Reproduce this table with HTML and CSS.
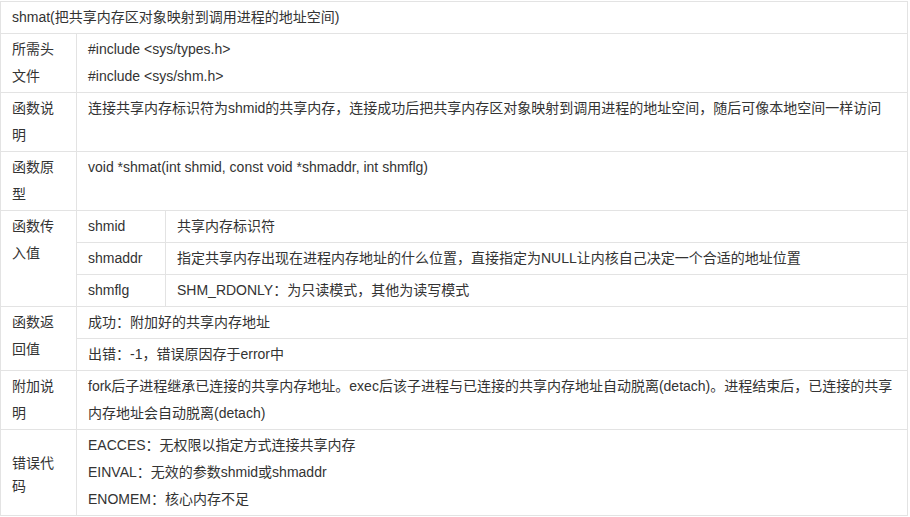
FILE: index.html
```html
<!DOCTYPE html>
<html lang="zh-CN">
<head>
<meta charset="utf-8">
<title>shmat</title>
<link rel="stylesheet" href="styles.css">
</head>
<body>
<table class="api">
  <colgroup>
    <col class="c1">
    <col class="c2">
    <col class="c3">
  </colgroup>
  <tbody>
    <tr>
      <td colspan="3">shmat(把共享内存区对象映射到调用进程的地址空间)</td>
    </tr>
    <tr>
      <td>所需头文件</td>
      <td colspan="2">#include &lt;sys/types.h&gt;<br>#include &lt;sys/shm.h&gt;</td>
    </tr>
    <tr>
      <td>函数说明</td>
      <td colspan="2">连接共享内存标识符为shmid的共享内存，连接成功后把共享内存区对象映射到调用进程的地址空间，随后可像本地空间一样访问</td>
    </tr>
    <tr>
      <td>函数原型</td>
      <td colspan="2">void *shmat(int shmid, const void *shmaddr, int shmflg)</td>
    </tr>
    <tr>
      <td rowspan="3">函数传入值</td>
      <td>shmid</td>
      <td>共享内存标识符</td>
    </tr>
    <tr>
      <td>shmaddr</td>
      <td>指定共享内存出现在进程内存地址的什么位置，直接指定为NULL让内核自己决定一个合适的地址位置</td>
    </tr>
    <tr>
      <td>shmflg</td>
      <td>SHM_RDONLY：为只读模式，其他为读写模式</td>
    </tr>
    <tr>
      <td rowspan="2">函数返回值</td>
      <td colspan="2">成功：附加好的共享内存地址</td>
    </tr>
    <tr>
      <td colspan="2">出错：-1，错误原因存于error中</td>
    </tr>
    <tr>
      <td>附加说明</td>
      <td colspan="2">fork后子进程继承已连接的共享内存地址。exec后该子进程与已连接的共享内存地址自动脱离(detach)。进程结束后，已连接的共享内存地址会自动脱离(detach)</td>
    </tr>
    <tr>
      <td class="mid">错误代码</td>
      <td colspan="2">EACCES：无权限以指定方式连接共享内存<br>EINVAL：无效的参数shmid或shmaddr<br>ENOMEM：核心内存不足</td>
    </tr>
  </tbody>
</table>
</body>
</html>
```

FILE: styles.css
```css
html, body {
  margin: 0;
  padding: 0;
  background: #ffffff;
}

body {
  padding-top: 1px;
  font-family: "Liberation Sans", Arial, "Noto Sans CJK SC", sans-serif;
  font-size: 14px;
  color: #333333;
}

.api {
  width: 908px;
  table-layout: fixed;
  border-collapse: collapse;
}

.api .c1 {
  width: 76px;
}

.api .c2 {
  width: 89px;
}

.api td {
  border: 1px solid #e3e3e3;
  padding: 2px 10px 2px 11px;
  line-height: 27px;
  vertical-align: top;
  word-break: break-all;
}

.api td.mid {
  vertical-align: middle;
  line-height: 23px;
  padding-top: 6px;
}
```
